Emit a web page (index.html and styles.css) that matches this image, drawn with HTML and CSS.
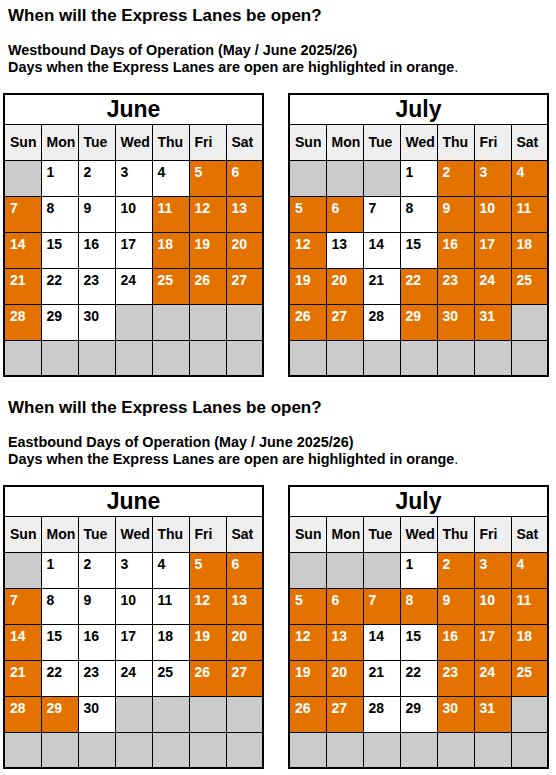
FILE: index.html
```html
<!DOCTYPE html>
<html lang="en">
<head>
  <meta charset="UTF-8" />
  <meta name="viewport" content="width=device-width, initial-scale=1.0"/>
  <title>Express Lanes Days of Operation</title>
  <link rel="stylesheet" href="styles.css">
</head>
<body>
  <div class="section">
    <h2>When will the Express Lanes be open?</h2>
    <p class="intro">
      Westbound Days of Operation (May / June 2025/26)<br>
      Days when the Express Lanes are open are highlighted in orange<span class="dot">.</span>
    </p>
    <div class="calendars">
      <table class="cal" id="wb-june"></table>
      <table class="cal" id="wb-july"></table>
    </div>
  </div>

  <div class="section">
    <h2>When will the Express Lanes be open?</h2>
    <p class="intro">
      Eastbound Days of Operation (May / June 2025/26)<br>
      Days when the Express Lanes are open are highlighted in orange<span class="dot">.</span>
    </p>
    <div class="calendars">
      <table class="cal" id="eb-june"></table>
      <table class="cal" id="eb-july"></table>
    </div>
  </div>

  <script>
    const DAYS = ["Sun", "Mon", "Tue", "Wed", "Thu", "Fri", "Sat"];

    const calendars = [
      { id: "wb-june", name: "June", offset: 1, length: 30,
        open: [5, 6, 7, 11, 12, 13, 14, 18, 19, 20, 21, 25, 26, 27, 28] },
      { id: "wb-july", name: "July", offset: 3, length: 31,
        open: [2, 3, 4, 5, 6, 9, 10, 11, 12, 16, 17, 18, 19, 20, 22, 23, 24, 25, 26, 27, 29, 30, 31] },
      { id: "eb-june", name: "June", offset: 1, length: 30,
        open: [5, 6, 7, 12, 13, 14, 19, 20, 21, 26, 27, 28, 29] },
      { id: "eb-july", name: "July", offset: 3, length: 31,
        open: [2, 3, 4, 5, 6, 7, 8, 9, 10, 11, 12, 13, 16, 17, 18, 19, 20, 23, 24, 25, 26, 27, 30, 31] }
    ];

    function buildCalendar(cal) {
      const table = document.getElementById(cal.id);
      let html = `<tr class="title-row"><th colspan="7">${cal.name}</th></tr>`;
      html += `<tr class="head-row">${DAYS.map(d => `<th>${d}</th>`).join("")}</tr>`;
      for (let row = 0; row < 6; row++) {
        html += "<tr>";
        for (let col = 0; col < 7; col++) {
          const day = row * 7 + col - cal.offset + 1;
          if (day < 1 || day > cal.length) {
            html += `<td class="empty"></td>`;
          } else if (cal.open.includes(day)) {
            html += `<td class="open">${day}</td>`;
          } else {
            html += `<td>${day}</td>`;
          }
        }
        html += "</tr>";
      }
      table.innerHTML = html;
    }

    calendars.forEach(buildCalendar);
  </script>
</body>
</html>
```

FILE: styles.css
```css
:root {
  --orange: #e37200;
  --grey: #cbcbcb;
  --head-bg: #efefef;
}

* {
  box-sizing: border-box;
}

body {
  margin: 0;
  background: #fff;
  color: #000;
  font-family: "Liberation Sans", Arial, sans-serif;
}

.section {
  padding-top: 6px;
}

h2 {
  margin: 0 0 0 8px;
  font-size: 17px;
  line-height: 20px;
  font-weight: bold;
}

.intro {
  margin: 16px 0 0 8px;
  font-size: 14.4px;
  line-height: 17px;
  font-weight: bold;
}

.intro .dot {
  font-weight: normal;
}

.calendars {
  display: flex;
  gap: 24px;
  padding-left: 3px;
  margin: 17px 0 15px;
}

.cal {
  width: 261px;
  table-layout: fixed;
  border-collapse: collapse;
  border: 2px solid #000;
}

.cal th,
.cal td {
  border: 1px solid #000;
  padding: 0 0 0 5px;
  text-align: left;
  font-size: 14px;
  font-weight: bold;
}

.cal .title-row th {
  height: 30px;
  padding: 0;
  text-align: center;
  font-size: 23px;
  background: #fff;
}

.cal .head-row th {
  height: 36px;
  background: var(--head-bg);
}

.cal td {
  height: 36px;
  padding-top: 3px;
  line-height: 16px;
  vertical-align: top;
  background: #fff;
}

.cal td.open {
  background: var(--orange);
  color: #fff;
}

.cal td.empty {
  background: var(--grey);
}
```
